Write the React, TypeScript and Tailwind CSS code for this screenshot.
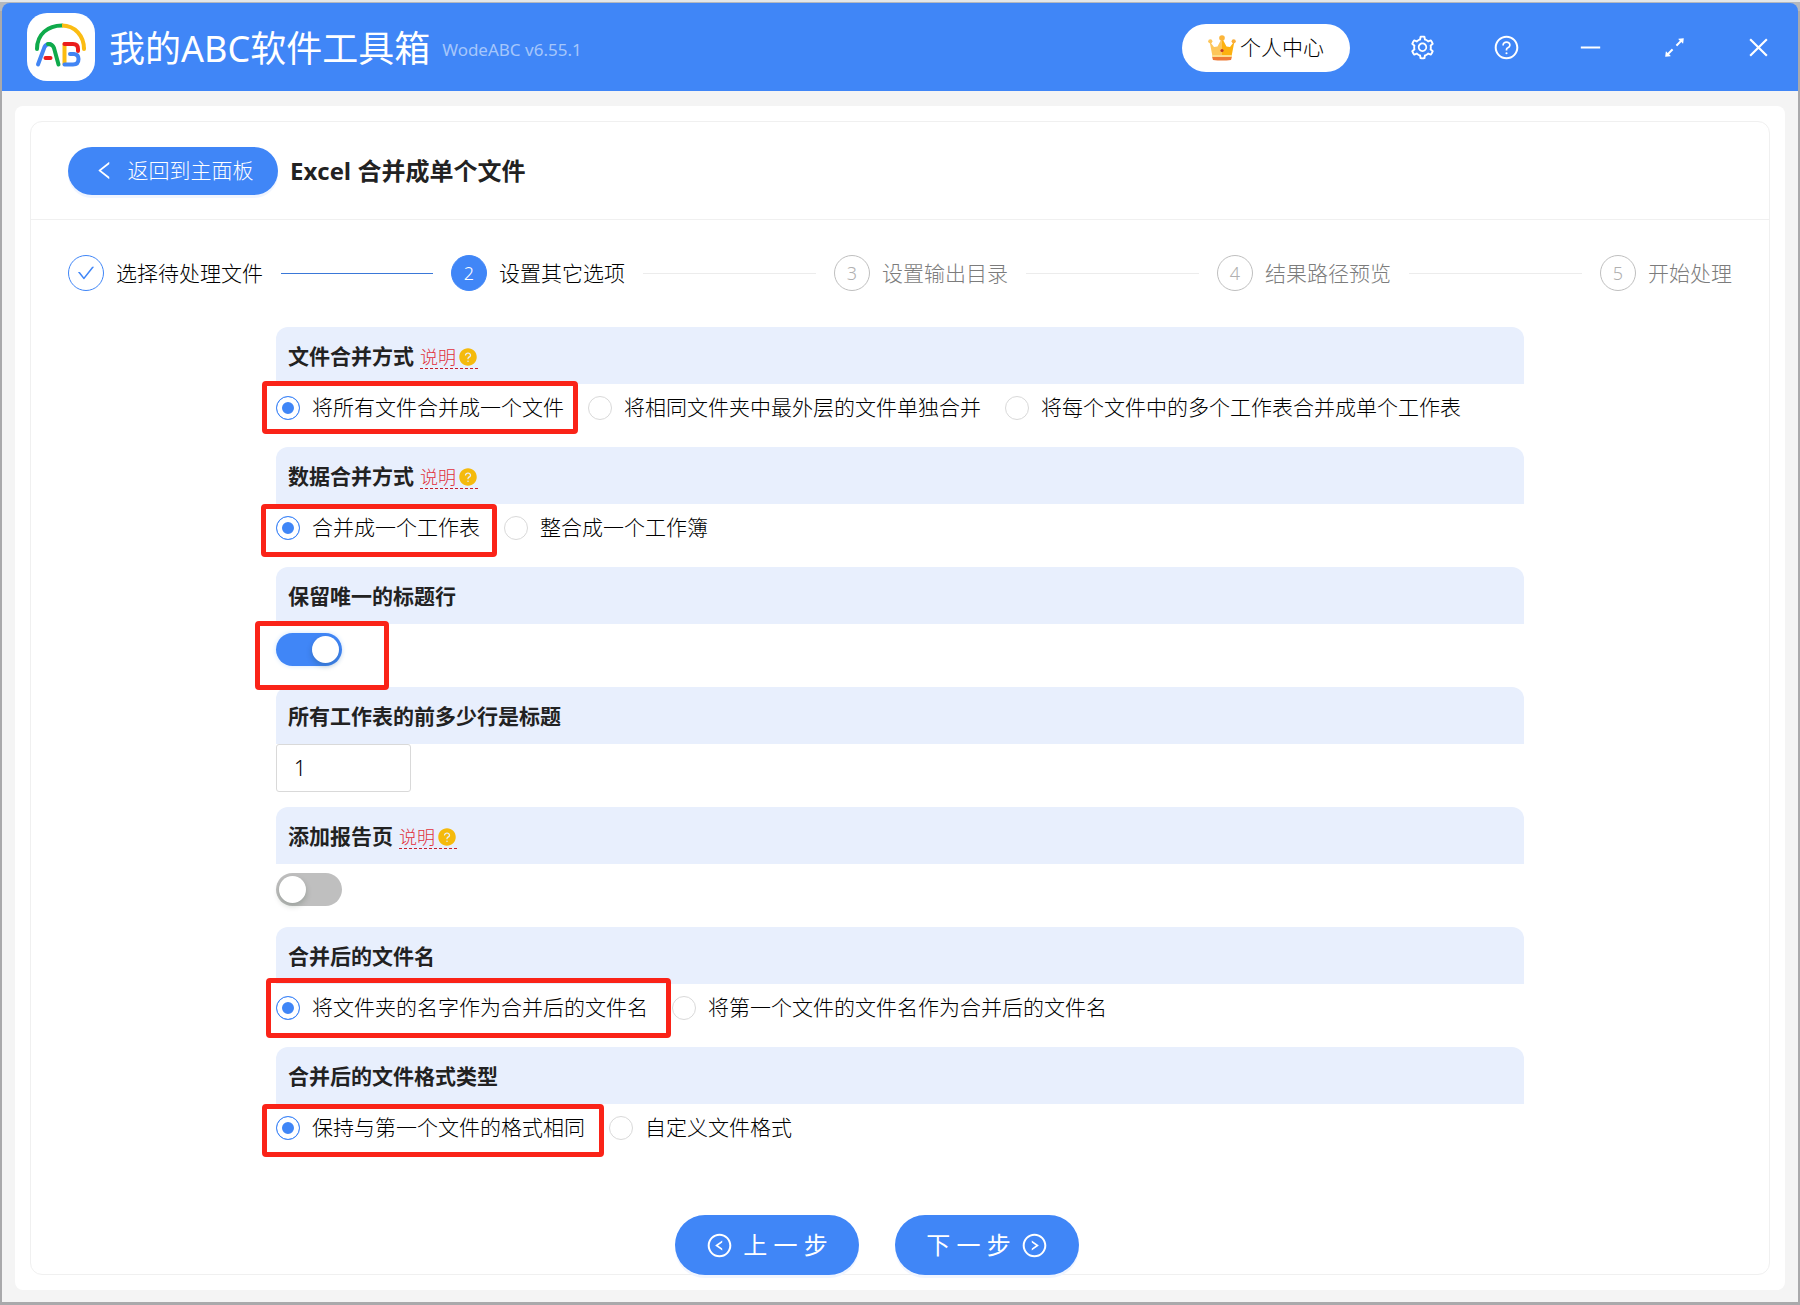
import { useState, type ReactNode } from "react";
import {
  AiFillQuestionCircle,
  AiOutlineArrowsAlt,
  AiOutlineCheck,
  AiOutlineClose,
  AiOutlineLeft,
  AiOutlineLeftCircle,
  AiOutlineMinus,
  AiOutlineQuestionCircle,
  AiOutlineRightCircle,
  AiOutlineSetting,
} from "react-icons/ai";

function Logo() {
  return (
    <svg viewBox="0 0 68 68" className="size-[68px] shrink-0" fill="none" strokeLinecap="round" aria-hidden="true">
      <rect width="68" height="68" rx="20" fill="#fff" />
      <path d="M10 36C10 21 21 12.500 35 12.500" stroke="#0faa4b" strokeWidth="4" />
      <path d="M35 12.500C48 12.500 57 23 57 36" stroke="#fbbc12" strokeWidth="4" strokeLinecap="butt" />
      <circle cx="57" cy="36" r="2" fill="#fbbc12" />
      <path d="M37.500 51V31" stroke="#fbbc12" strokeWidth="4" />
      <path d="M11 51.500L17.500 34Q19 31 23 31" stroke="#4285f4" strokeWidth="4" />
      <path d="M21 31Q25.500 31 27 35L31.500 51.500" stroke="#0faa4b" strokeWidth="4" />
      <path d="M18.500 45H23.500" stroke="#ea1c1c" strokeWidth="4" />
      <path d="M37.500 31H46Q51 31 51 36V38" stroke="#ea1c1c" strokeWidth="4" />
      <path d="M43 41H47Q51.500 41.500 51.500 46Q51.500 51.500 46 51.500H37.500" stroke="#4285f4" strokeWidth="4" />
    </svg>
  );
}

function Crown() {
  return (
    <svg viewBox="0 0 28 26" className="h-[26px] w-7" aria-hidden="true">
      <path d="M1.500 6L6 12L9.500 11.500L14 3V21.500H4.500Z" fill="#fdc65a" />
      <path d="M14 3L18.500 11.500L22 12L26.500 6L23.500 21.500H14Z" fill="#fdb10f" />
      <circle cx="14" cy="3" r="2.800" fill="#fbb53a" />
      <circle cx="2.300" cy="6.300" r="2.100" fill="#fdc65a" />
      <circle cx="25.700" cy="6.300" r="2.100" fill="#f9ad3a" />
      <circle cx="14" cy="15.500" r="1.600" fill="#c0392b" />
      <path d="M4 21.500H24L23 25Q14 26 5 25Z" fill="#ee7a35" />
      <path d="M4 20H24V22H4Z" fill="#fddc8a" />
    </svg>
  );
}

const windowButtons: { label: string; icon: ReactNode }[] = [
  { label: "设置", icon: <AiOutlineSetting /> },
  { label: "帮助", icon: <AiOutlineQuestionCircle /> },
  { label: "最小化", icon: <AiOutlineMinus /> },
  { label: "最大化", icon: <AiOutlineArrowsAlt /> },
  { label: "关闭", icon: <AiOutlineClose /> },
];

function TitleBar() {
  return (
    <header className="flex h-[88px] items-center rounded-t-lg bg-[#4086f7] pr-4 pl-[25px] text-white">
      <Logo />
      <span className="mt-1 ml-[14px] text-4xl whitespace-nowrap">我的ABC软件工具箱</span>
      <span className="mt-[6px] ml-3 text-[17px] whitespace-nowrap text-[#a6c6fb]">WodeABC v6.55.1</span>
      <div className="ml-auto flex items-center gap-9">
        <button
          type="button"
          className="mt-[2px] mr-3 flex h-12 w-[168px] items-center justify-center gap-1 rounded-full bg-white text-[21px] font-light text-black"
        >
          <Crown />
          个人中心
        </button>
        {windowButtons.map((b) => (
          <button key={b.label} type="button" aria-label={b.label} className="flex size-12 items-center justify-center text-[27px]">
            {b.icon}
          </button>
        ))}
      </div>
    </header>
  );
}

const steps = ["选择待处理文件", "设置其它选项", "设置输出目录", "结果路径预览", "开始处理"];
const CURRENT = 1;

function Steps() {
  return (
    <ol className="flex h-9 items-center">
      {steps.map((label, i) => {
        const circle =
          i < CURRENT
            ? "border-[#4086f7] text-[#4086f7]"
            : i === CURRENT
              ? "border-[#4086f7] bg-[#4086f7] text-white"
              : "border-[#bfbfbf] text-[#b0b0b0]";
        const last = i === steps.length - 1;
        return (
          <li key={label} className={last ? "flex items-center" : "flex flex-1 items-center"}>
            <span className={`flex size-9 shrink-0 items-center justify-center rounded-full border text-lg font-light ${circle}`}>
              {i < CURRENT ? <AiOutlineCheck className="text-[20px]" /> : i + 1}
            </span>
            <span
              className={`ml-3 pt-[2px] text-[21px] font-light whitespace-nowrap ${i > CURRENT ? "text-[#7c7c7c]" : "text-black"}`}
            >
              {label}
            </span>
            {!last && <span className={`mx-[18px] h-px flex-1 ${i < CURRENT ? "bg-[#3a78d8]" : "bg-[#ececec]"}`} />}
          </li>
        );
      })}
    </ol>
  );
}

function Section({ title, help, children }: { title: string; help?: boolean; children: ReactNode }) {
  return (
    <section className="h-[120px]">
      <div className="flex h-[57px] items-center gap-[6px] rounded-t-xl bg-[#e8effd] px-3 pt-[2px]">
        <h2 className="text-[21px] font-bold text-[#222]">{title}</h2>
        {help && (
          <a
            href="#help"
            className="flex h-6 items-center gap-[2px] border-b border-dashed border-[#c8202c] pt-px text-lg leading-6 font-light text-[#e0303a]"
          >
            说明
            <AiFillQuestionCircle className="text-[20px] text-[#f5ba0c]" />
          </a>
        )}
      </div>
      {children}
    </section>
  );
}

function RadioRow({ name, options, mark }: { name: string; options: string[]; mark: string }) {
  const [value, setValue] = useState(options[0]);
  return (
    <div className="relative flex h-12 items-center gap-6">
      {options.map((o) => (
        <label key={o} className="flex items-center gap-3 text-[21px] font-light whitespace-nowrap text-black">
          <input
            type="radio"
            name={name}
            checked={value === o}
            onChange={() => setValue(o)}
            className="size-6 shrink-0 appearance-none rounded-full border border-[#d9d9d9] bg-white checked:border-[#4086f7] checked:bg-[#4086f7] checked:shadow-[inset_0_0_0_5px_#fff]"
          />
          {o}
        </label>
      ))}
      <Mark className={mark} />
    </div>
  );
}

function Mark({ className }: { className: string }) {
  return <div className={`pointer-events-none absolute z-10 rounded-[4px] border-[5px] border-[#fa2318] ${className}`} />;
}

function Switch({ label, initial }: { label: string; initial: boolean }) {
  const [on, setOn] = useState(initial);
  return (
    <button
      type="button"
      role="switch"
      aria-checked={on}
      aria-label={label}
      onClick={() => setOn(!on)}
      className={`flex h-[33px] w-[66px] items-center rounded-full p-[3px] ${on ? "justify-end bg-[#4086f7] shadow-[0_0_5px_#cfe4ff]" : "bg-[#bfbfbf]"}`}
    >
      <span className="size-[27px] rounded-full bg-white shadow-[0_3px_6px_rgba(0,35,11,0.2)]" />
    </button>
  );
}

export default function App() {
  const [rows, setRows] = useState("1");
  return (
    <div className="flex min-h-screen flex-col bg-[#a9a9ab] px-[2px] pb-[3px] font-['Noto_Sans','Noto_Sans_CJK_SC',sans-serif]">
      <div className="-mx-[2px] -mb-2 h-[11px] bg-[linear-gradient(#e4e6e8_0_2px,#b4b8be_2px)]" />
      <TitleBar />
      <main className="flex flex-1 flex-col bg-[#f4f4f4] px-[13px] pt-[15px] pb-3">
        <div className="flex flex-1 flex-col rounded-lg bg-white p-[15px]">
          <div className="flex flex-1 flex-col rounded-xl border border-[#f0f0f0]">
            <div className="flex h-[98px] items-center gap-3 border-b border-[#f0f0f0] px-[37px]">
              <button
                type="button"
                className="flex h-12 w-[210px] items-center justify-center gap-3 rounded-full bg-[#4086f7] text-[21px] font-light text-white shadow-[0_3px_0_#f0f5ff]"
              >
                <AiOutlineLeft className="text-[23px]" />
                返回到主面板
              </button>
              <h1 className="pt-px text-2xl font-bold text-[#222] [font-family:'Open_Sans','Noto_Sans_CJK_SC',sans-serif]">
                Excel 合并成单个文件
              </h1>
            </div>
            <div className="flex flex-1 flex-col px-[37px] pt-[35px]">
              <Steps />
              <form className="mx-auto mt-9 w-3/4">
                <Section title="文件合并方式" help>
                  <RadioRow
                    name="file-merge"
                    options={["将所有文件合并成一个文件", "将相同文件夹中最外层的文件单独合并", "将每个文件中的多个工作表合并成单个工作表"]}
                    mark="-top-[3px] -left-[14px] h-[53px] w-[316px]"
                  />
                </Section>
                <Section title="数据合并方式" help>
                  <RadioRow
                    name="data-merge"
                    options={["合并成一个工作表", "整合成一个工作簿"]}
                    mark="top-0 -left-[15px] h-[53px] w-[236px]"
                  />
                </Section>
                <Section title="保留唯一的标题行">
                  <div className="relative pt-[9px]">
                    <Switch label="保留唯一的标题行" initial />
                    <Mark className="-top-[3px] -left-[21px] h-[69px] w-[134px]" />
                  </div>
                </Section>
                <Section title="所有工作表的前多少行是标题">
                  <input
                    type="text"
                    aria-label="所有工作表的前多少行是标题"
                    value={rows}
                    onChange={(e) => setRows(e.target.value)}
                    className="block h-12 w-[135px] rounded-[3px] border border-[#d9d9d9] bg-white px-[17px] text-[21px] font-light text-black"
                  />
                </Section>
                <Section title="添加报告页" help>
                  <div className="pt-[9px]">
                    <Switch label="添加报告页" initial={false} />
                  </div>
                </Section>
                <Section title="合并后的文件名">
                  <RadioRow
                    name="file-name"
                    options={["将文件夹的名字作为合并后的文件名", "将第一个文件的文件名作为合并后的文件名"]}
                    mark="-top-[6px] -left-[10px] h-[60px] w-[405px]"
                  />
                </Section>
                <Section title="合并后的文件格式类型">
                  <RadioRow
                    name="file-format"
                    options={["保持与第一个文件的格式相同", "自定义文件格式"]}
                    mark="top-0 -left-[14px] h-[53px] w-[342px]"
                  />
                </Section>
              </form>
              <div className="-mb-px mt-auto flex justify-center gap-9 pr-[46px]">
                <button
                  type="button"
                  className="flex h-[60px] w-[184px] items-center justify-center gap-[10px] rounded-full bg-[#4086f7] text-2xl whitespace-nowrap text-white shadow-[0_3px_0_#f0f5ff]"
                >
                  <AiOutlineLeftCircle className="text-[27px]" />
                  上 一 步
                </button>
                <button
                  type="button"
                  className="flex h-[60px] w-[184px] items-center justify-center gap-[10px] rounded-full bg-[#4086f7] text-2xl whitespace-nowrap text-white shadow-[0_3px_0_#f0f5ff]"
                >
                  下 一 步
                  <AiOutlineRightCircle className="text-[27px]" />
                </button>
              </div>
            </div>
          </div>
        </div>
      </main>
    </div>
  );
}
